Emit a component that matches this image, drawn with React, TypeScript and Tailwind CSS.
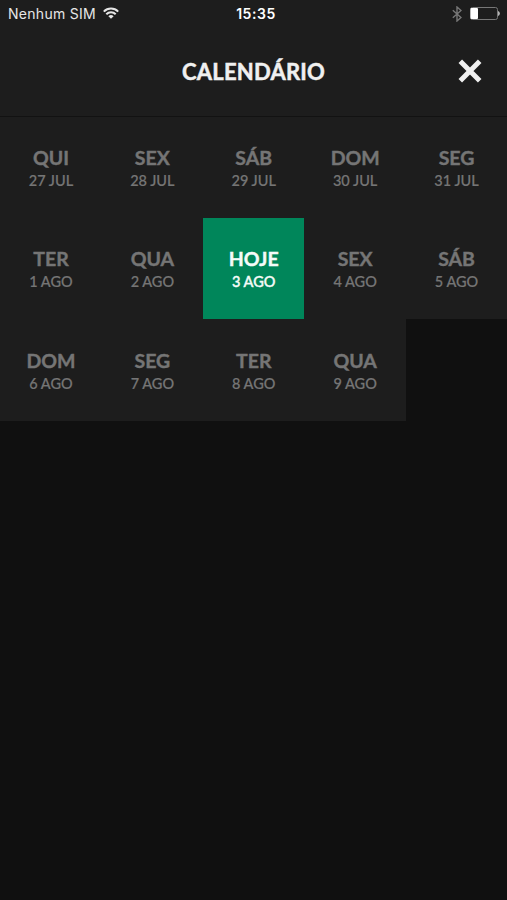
type Day = { name: string; date: string; today?: boolean };

const days: Day[] = [
  { name: "QUI", date: "27 JUL" },
  { name: "SEX", date: "28 JUL" },
  { name: "SÁB", date: "29 JUL" },
  { name: "DOM", date: "30 JUL" },
  { name: "SEG", date: "31 JUL" },
  { name: "TER", date: "1 AGO" },
  { name: "QUA", date: "2 AGO" },
  { name: "HOJE", date: "3 AGO", today: true },
  { name: "SEX", date: "4 AGO" },
  { name: "SÁB", date: "5 AGO" },
  { name: "DOM", date: "6 AGO" },
  { name: "SEG", date: "7 AGO" },
  { name: "TER", date: "8 AGO" },
  { name: "QUA", date: "9 AGO" },
];

function StatusBar() {
  return (
    <div className="grid h-7 grid-cols-3 items-center font-['Inter',sans-serif] text-[14px] leading-7 text-[#e6e6e6]">
      <div className="flex items-center gap-[7px] pl-2">
        <span className="whitespace-nowrap tracking-[0.02em]">Nenhum SIM</span>
        <svg width="16" height="12" viewBox="0 0 16 12" fill="none" stroke="#e6e6e6" strokeWidth="2" className="-mt-[3px]">
          <path d="M0.8 4.6a10.2 10.2 0 0 1 14.4 0" />
          <path d="M3.3 7.3a6.6 6.6 0 0 1 9.4 0" />
          <path d="M8 11.8 5.4 9.2a3.7 3.7 0 0 1 5.2 0z" fill="#e6e6e6" stroke="none" />
        </svg>
      </div>
      <div className="pl-[5px] text-center font-semibold tracking-[0.04em] text-white">15:35</div>
      <div className="flex items-center justify-end gap-2 pr-[7px]">
        <svg width="10" height="16" viewBox="0 0 10 16" fill="none" stroke="#777777" strokeWidth="1.4">
          <path d="M0.8 4.3 9 11.5 5 15V1l4 3.5-8.2 7.2" />
        </svg>
        <svg width="30" height="13" viewBox="0 0 30 13" className="-mt-px">
          <rect x="0.5" y="0.5" width="27" height="12" rx="2" fill="none" stroke="#777777" />
          <rect x="0.5" y="1" width="7.5" height="11" rx="1" fill="#ffffff" />
          <path d="M28.6 4.5q1.6 2 0 4z" fill="#cccccc" stroke="#cccccc" strokeWidth="0.8" />
        </svg>
      </div>
    </div>
  );
}

function DayCell({ day }: { day: Day }) {
  return (
    <button
      className={`flex h-[101.2px] flex-col items-center pt-[29.2px] pl-[0.5px] ${
        day.today ? "bg-[#00865a] text-[#f4fbf8]" : "bg-[#1d1d1d] text-[#757575]"
      }`}
    >
      <span className="text-[19.5px] leading-6 font-bold [-webkit-text-stroke:0.4px_currentColor]">{day.name}</span>
      <span
        className={`text-[14.5px] leading-[21px] font-medium ${
          day.today ? "[-webkit-text-stroke:0.4px_currentColor]" : "[-webkit-text-stroke:0.2px_currentColor]"
        }`}
      >
        {day.date}
      </span>
    </button>
  );
}

export default function App() {
  return (
    <main className="flex h-[900px] w-[507px] flex-col overflow-hidden bg-[#101010] font-['Lato',sans-serif]">
      <header className="h-[117px] border-b border-[#121212] bg-[#1d1d1d]">
        <StatusBar />
        <div className="grid h-[86px] grid-cols-[1fr_auto_1fr] items-center">
          <h1 className="col-start-2 pt-px text-[22px] leading-7 font-bold tracking-[0.01em] text-[#f0f0f0] [-webkit-text-stroke:0.5px_currentColor]">
            CALENDÁRIO
          </h1>
          <button aria-label="Fechar" className="mr-[25px] justify-self-end">
            <svg width="24" height="24" viewBox="0 0 24 24" fill="none" stroke="#f0f0f0" strokeWidth="5">
              <path d="M2.3 2.3l19.4 19.4M21.7 2.3 2.3 21.7" />
            </svg>
          </button>
        </div>
      </header>
      <section className="grid grid-cols-5">
        {days.map((day) => (
          <DayCell key={day.date} day={day} />
        ))}
      </section>
    </main>
  );
}
